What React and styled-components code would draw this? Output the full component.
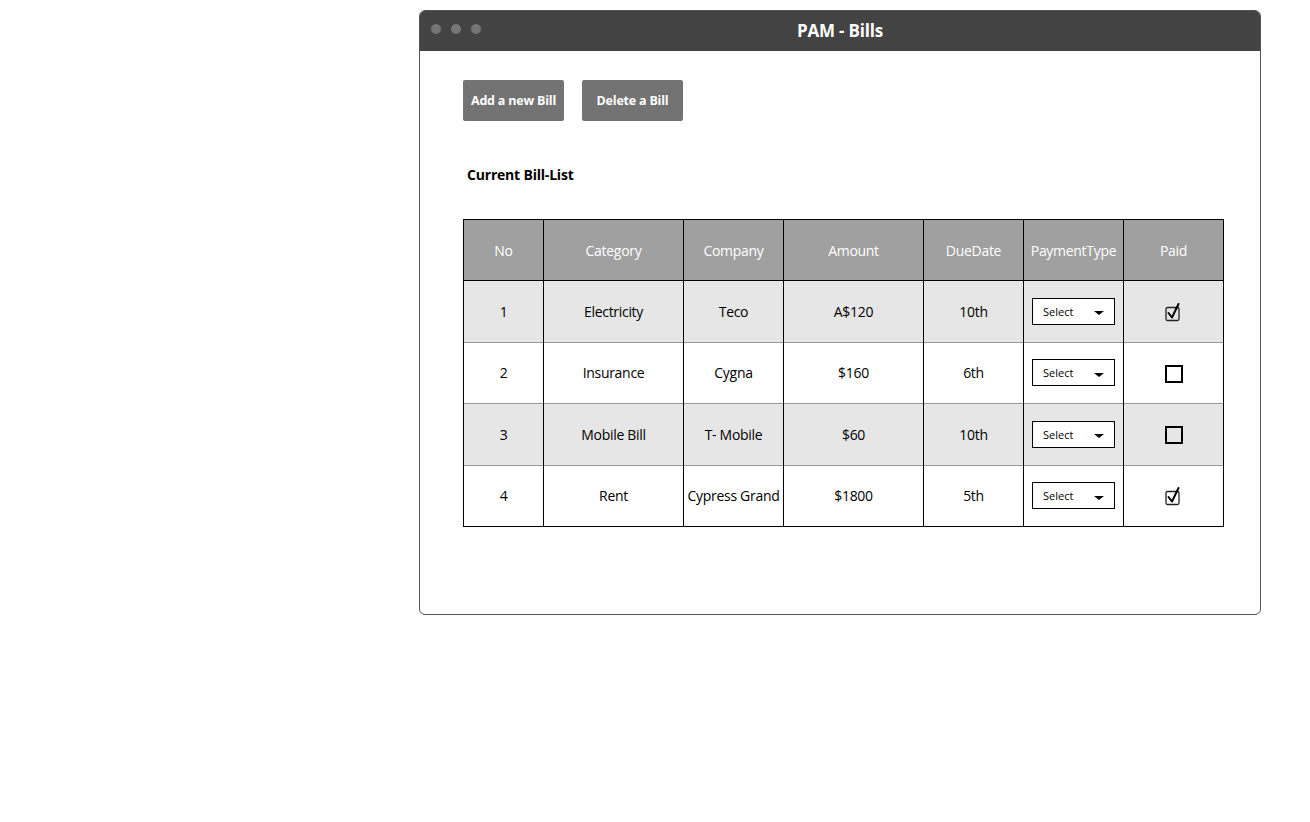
import React from "react";
import styled, { createGlobalStyle } from "styled-components";

const Global = createGlobalStyle`
  body {
    margin: 0;
    background: #fff;
    font-family: "Open Sans", "Liberation Sans", sans-serif;
  }
`;

const bills = [
  { no: 1, category: "Electricity", company: "Teco", amount: "A$120", due: "10th", paid: true },
  { no: 2, category: "Insurance", company: "Cygna", amount: "$160", due: "6th", paid: false },
  { no: 3, category: "Mobile Bill", company: "T- Mobile", amount: "$60", due: "10th", paid: false },
  { no: 4, category: "Rent", company: "Cypress Grand", amount: "$1800", due: "5th", paid: true },
];

const columns = [
  { label: "No", width: 80 },
  { label: "Category", width: 140 },
  { label: "Company", width: 100 },
  { label: "Amount", width: 140 },
  { label: "DueDate", width: 100 },
  { label: "PaymentType", width: 100 },
  { label: "Paid", width: 100 },
];

const Page = () => {
  return (
    <>
      <Global />
      <Stage>
        <Window>
          <TitleBar>
            <Dots>
              <Dot />
              <Dot />
              <Dot />
            </Dots>
            <Title>PAM - Bills</Title>
          </TitleBar>
          <Body>
            <Actions>
              <ActionButton>Add a new Bill</ActionButton>
              <ActionButton>Delete a Bill</ActionButton>
            </Actions>
            <Heading>Current Bill-List</Heading>
            <Table>
              <colgroup>
                {columns.map((c) => (
                  <col key={c.label} style={{ width: c.width }} />
                ))}
              </colgroup>
              <thead>
                <tr>
                  {columns.map((c) => (
                    <HeadCell key={c.label}>{c.label}</HeadCell>
                  ))}
                </tr>
              </thead>
              <tbody>
                {bills.map((b, i) => (
                  <Row key={b.no} $shaded={i % 2 === 0}>
                    <Cell>{b.no}</Cell>
                    <Cell>{b.category}</Cell>
                    <Cell>{b.company}</Cell>
                    <Cell>{b.amount}</Cell>
                    <Cell>{b.due}</Cell>
                    <Cell>
                      <SelectBox>
                        <span>Select</span>
                        <Caret />
                      </SelectBox>
                    </Cell>
                    <Cell>
                      {b.paid ? (
                        <svg width="20" height="20" viewBox="0 0 20 20">
                          <rect x="2" y="5.5" width="13" height="13" rx="1.5" fill="none" stroke="#222" strokeWidth="1.3" />
                          <path d="M4.5 11 L8 15.5 L14.5 2" fill="none" stroke="#000" strokeWidth="2" strokeLinecap="round" strokeLinejoin="round" />
                        </svg>
                      ) : (
                        <EmptyBox />
                      )}
                    </Cell>
                  </Row>
                ))}
              </tbody>
            </Table>
          </Body>
        </Window>
      </Stage>
    </>
  );
};

const Stage = styled.div`
  width: 1310px;
  height: 822px;
  padding: 10px 0 0 419px;
  box-sizing: border-box;
`;

const Window = styled.div`
  width: 842px;
  height: 605px;
  box-sizing: border-box;
  border: 1px solid #555;
  border-radius: 6px;
  overflow: hidden;
  display: flex;
  flex-direction: column;
`;

const TitleBar = styled.div`
  height: 40px;
  background: #434343;
  position: relative;
  display: flex;
  align-items: center;
  justify-content: center;
`;

const Dots = styled.div`
  position: absolute;
  left: 11px;
  top: 13px;
  display: flex;
  gap: 10px;
`;

const Dot = styled.span`
  width: 10px;
  height: 10px;
  border-radius: 50%;
  background: #767676;
`;

const Title = styled.div`
  color: #fff;
  font-weight: 700;
  font-size: 17px;
  margin-top: -2px;
  letter-spacing: -0.2px;
`;

const Body = styled.div`
  padding: 29px 0 0 43px;
`;

const Actions = styled.div`
  display: flex;
  gap: 18px;
`;

const ActionButton = styled.button`
  width: 101px;
  height: 41px;
  border: none;
  border-radius: 2px;
  background: #737373;
  color: #fff;
  font-family: inherit;
  font-weight: 700;
  font-size: 12.5px;
  padding: 0;
  letter-spacing: -0.2px;
`;

const Heading = styled.div`
  margin: 45px 0 0 4px;
  font-weight: 700;
  font-size: 14px;
  letter-spacing: -0.2px;
  color: #000;
  height: 17px;
  line-height: 17px;
`;

const Table = styled.table`
  margin-top: 36px;
  border-collapse: collapse;
  table-layout: fixed;
  width: 760px;
  border: 1px solid #000;
  font-size: 14px;
`;

const HeadCell = styled.th`
  height: 60px;
  background: #a0a0a0;
  color: #fff;
  font-weight: 400;
  border: 1px solid #000;
  padding: 0;
  letter-spacing: -0.3px;
`;

const Row = styled.tr`
  background: ${(p) => (p.$shaded ? "#e6e6e6" : "#fff")};
  height: 61.5px;
  border-top: 1px solid #999;
`;

const Cell = styled.td`
  text-align: center;
  vertical-align: middle;
  border-left: 1px solid #000;
  border-right: 1px solid #000;
  padding: 0;
  color: #000;
  letter-spacing: -0.3px;
  white-space: nowrap;

  svg {
    display: inline-block;
    vertical-align: middle;
  }
`;

const SelectBox = styled.div`
  width: 83px;
  height: 27px;
  margin: 0 auto;
  border: 1px solid #000;
  background: #fff;
  display: flex;
  align-items: center;
  justify-content: space-between;
  padding: 0 10px 0 10px;
  box-sizing: border-box;
  font-size: 11px;
  letter-spacing: 0;
`;

const Caret = styled.span`
  width: 0;
  height: 0;
  border-left: 5px solid transparent;
  border-right: 5px solid transparent;
  border-top: 4px solid #000;
  margin-top: 4px;
`;

const EmptyBox = styled.span`
  display: inline-block;
  width: 14px;
  height: 14px;
  border: 2px solid #000;
  vertical-align: middle;
`;

export default Page;
